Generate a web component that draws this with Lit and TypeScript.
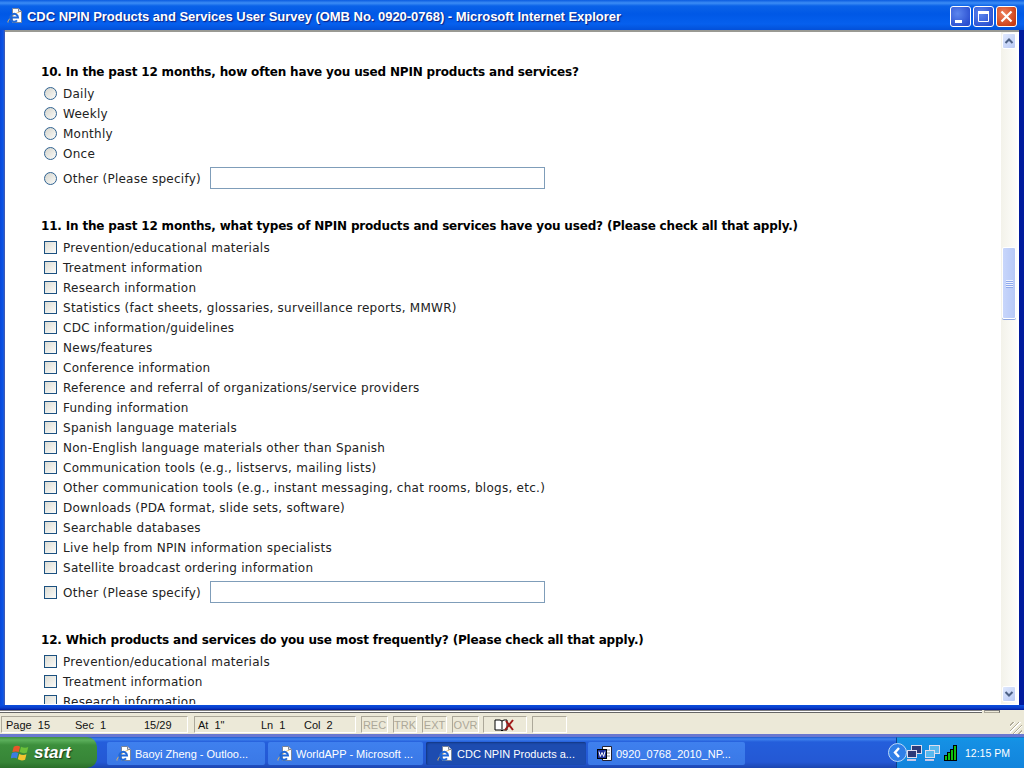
import { LitElement, html, css } from "lit";
import { customElement } from "lit/decorators.js";

const ieIcon = html`<svg width="16" height="16" viewBox="0 0 16 16" class="ico">
  <path d="M5.500 0.500h6l3 3v11h-9z" fill="#fff" stroke="#7a8498" stroke-width="1"/>
  <path d="M11.500 0.500v3h3" fill="#dde" stroke="#7a8498" stroke-width="1"/>
  <path d="M1 14.500c-1-2 6-9 11.500-10.500" fill="none" stroke="#e8b860" stroke-width="1"/>
  <path d="M3.600 9.500h7.400a3.900 3.900 0 1 0-1 2.900" fill="none" stroke="#1f68d8" stroke-width="2"/>
</svg>`;

const wordIcon = html`<svg width="16" height="16" viewBox="0 0 16 16" class="ico">
  <path d="M5.500 0.500h9v14h-9z" fill="#fff" stroke="#223" stroke-width="1"/>
  <path d="M10 4h3M10 7h3M10 10h3" stroke="#889" stroke-width="1"/>
  <rect x="0.500" y="3.500" width="9" height="9" fill="#1c2f9c" stroke="#000" stroke-width="1"/>
  <path d="M2 5.500l1.300 5 1.700-4 1.700 4 1.300-5" fill="none" stroke="#fff" stroke-width="1"/>
</svg>`;

const Q10 = ["Daily", "Weekly", "Monthly", "Once"];
const Q11 = [
  "Prevention/educational materials",
  "Treatment information",
  "Research information",
  "Statistics (fact sheets, glossaries, surveillance reports, MMWR)",
  "CDC information/guidelines",
  "News/features",
  "Conference information",
  "Reference and referral of organizations/service providers",
  "Funding information",
  "Spanish language materials",
  "Non-English language materials other than Spanish",
  "Communication tools (e.g., listservs, mailing lists)",
  "Other communication tools (e.g., instant messaging, chat rooms, blogs, etc.)",
  "Downloads (PDA format, slide sets, software)",
  "Searchable databases",
  "Live help from NPIN information specialists",
  "Satellite broadcast ordering information",
];
const Q12 = ["Prevention/educational materials", "Treatment information", "Research information"];

@customElement("app-root")
export class AppRoot extends LitElement {
  static styles = css`
    :host { display: block; width: 1024px; height: 768px; overflow: hidden; font-family: "DejaVu Sans", Verdana, sans-serif; }
    .screen { width: 1024px; height: 768px; display: flex; flex-direction: column; overflow: hidden; background: #ece9d8; }
    .title { height: 30px; flex: none; display: flex; align-items: center; padding: 2px 7px 0 7px; box-sizing: border-box;
      background: linear-gradient(#0a5be0 0, #3c8df5 3px, #0a62e8 6px, #0058e6 14px, #0660ee 24px, #0350d8 30px); color: #fff; gap: 4px; }
    .title-text { font: bold 13px "Liberation Sans", Arial, sans-serif; letter-spacing: -0.03px; text-shadow: 1px 1px 1px #0f1f80; flex: 1; white-space: nowrap; }
    .ico { flex: none; display: block; }
    .winbtns { display: flex; gap: 2px; }
    .wb { width: 21px; height: 21px; border: 1px solid #fff; border-radius: 3px; box-sizing: border-box;
      background: radial-gradient(circle at 35% 35%, #5c86ee, #2a4fd0 80%); }
    .wb.close { background: radial-gradient(circle at 35% 35%, #f0805c, #c83c14 80%); }
    .wb svg { display: block; width: 19px; height: 19px; }
    .mid { height: 675px; flex: none; display: flex; background: linear-gradient(90deg, #0a55e8, #0a3cc8 60%, #001a9c); box-sizing: border-box; }
    .frame-l { width: 5px; flex: none; background: linear-gradient(90deg, #0a47d8, #0a55e8 60%, #4a5aa8); }
    .frame-r { width: 5px; flex: none; }
    .win { flex: 1; display: flex; border-top: 2px solid #9a9a94; border-bottom: 1px solid #fff; background: #fff; min-width: 0; padding-right: 2px; }
    .page { flex: 1; overflow: hidden; padding: 30px 0 0 36px; box-sizing: border-box; background: #fff; color: #222;
      font: 12px/20px "DejaVu Sans", Verdana, sans-serif; letter-spacing: 0.26px; }
    .q { font-size: 12px; font-weight: bold; color: #000; height: 20px; white-space: nowrap; letter-spacing: -0.17px; }
    .q.next { margin-top: 26px; }
    .list { margin: 2px 0 0 3px; }
    .row { height: 20px; display: flex; align-items: center; gap: 6px; white-space: nowrap; }
    .row.other { height: 22px; margin-top: 4px; }
    .row.other .lbl { margin-right: 3px; }
    .radio { width: 13px; height: 13px; flex: none; margin-top: -2px; border-radius: 50%; border: 1px solid #2f6291; box-sizing: border-box; background: linear-gradient(135deg, #d4d4cc, #fbfbf8); }
    .check { width: 13px; height: 13px; flex: none; margin-top: -2px; border: 1px solid #1c5180; box-sizing: border-box; background: linear-gradient(135deg, #dcdcd4, #fbfbf8); }
    .field { width: 335px; height: 22px; flex: none; margin-top: -2px; box-sizing: border-box; border: 1px solid #7f9db9; background: #fff; }
    .sb { width: 16px; flex: none; background: linear-gradient(90deg, #f3f2ea, #fdfdfa); display: flex; flex-direction: column; justify-content: space-between; position: relative; padding-bottom: 2px; box-sizing: border-box; }
    .sb-btn { width: 14px; height: 16px; margin: 1px 0 0 1px; border: 1px solid #fff; border-radius: 2px; box-sizing: border-box; background: linear-gradient(135deg, #dfe8fd, #b8c9f5); }
    .sb-btn svg { display: block; width: 12px; height: 14px; }
    .thumb { position: absolute; left: 1px; top: 215px; width: 14px; height: 72px; box-sizing: border-box; border: 1px solid #fff; border-radius: 2px; background: linear-gradient(90deg, #c8d6fb, #b7c9f7); box-shadow: 0 1px 0 #8ea6e0; display: flex; flex-direction: column; justify-content: center; align-items: center; gap: 1px; }
    .thumb i { display: block; width: 7px; height: 1px; background: #eef2fe; box-shadow: 0 1px 0 #8fa9ec; }
    .blue { height: 5px; flex: none; background: linear-gradient(#0a4fe0, #0a3cc8 60%, #001a9c); }
    .ruler { height: 5px; flex: none; display: flex; gap: 2px; box-sizing: border-box; padding-right: 24px; }
    .ruler-line { flex: 1; border-top: 1px solid #808080; border-bottom: 1px solid #666; height: 3px; background: #fff; box-sizing: border-box; }
    .ruler-box { width: 16px; border: 1px solid #aca899; border-top-color: #808080; border-right-color: #666; height: 3px; box-sizing: border-box; }
    .status { height: 19px; flex: none; display: flex; align-items: flex-start; padding: 1px 0 0 1px; box-sizing: border-box; gap: 5px; font: 11px "Liberation Sans", Arial, sans-serif; color: #111; background: #ece9d8; position: relative; }
    .cell { height: 17px; flex: none; display: flex; align-items: center; box-sizing: border-box; border: 1px solid #aca899; border-right-color: #fff; border-bottom-color: #fff; white-space: nowrap; }
    .cell span { display: block; }
    .c1 { width: 187px; padding-left: 4px; margin-right: 1px; }
    .c2 { width: 162px; padding-left: 3px; }
    .mini { color: #aca899; justify-content: center; font-size: 11px; }
    .grip { position: absolute; right: 2px; bottom: 0; width: 12px; height: 12px; background: repeating-linear-gradient(135deg, transparent 0 2px, #b0ab98 2px 3px, #fff 3px 4px); }
    .bluebar { height: 3px; flex: none; background: #6a78d0; }
    .task { height: 31px; flex: none; display: flex; align-items: center; box-sizing: border-box; background: linear-gradient(#1f5bd0 0, #3f83ee 2px, #245edb 5px, #2458d4 25px, #1b45b0 31px); position: relative; }
    .start { width: 97px; height: 31px; flex: none; box-sizing: border-box; padding-left: 11px; display: flex; align-items: center; gap: 3px; border-radius: 0 10px 10px 0; background: linear-gradient(#3f8f3f 0, #5cb05c 3px, #3c8f3c 8px, #378537 25px, #2a6f2a 31px); font: italic bold 17px "Liberation Sans", sans-serif; color: #fff; text-shadow: 1px 1px 1px #1a3f1a; }
    .tasks { display: flex; gap: 3px; padding: 2px 0 0 10px; flex: 1; }
    .tb { height: 23px; box-sizing: border-box; padding-left: 9px; display: flex; align-items: center; gap: 3px; border-radius: 2px; flex: none; background: linear-gradient(#3f80ee, #3a78e6); color: #fff; font: 11px "Liberation Sans", sans-serif; white-space: nowrap; }
    .tb.act { background: #1d4cb0; box-shadow: inset 1px 1px 2px #123580; margin-right: -1px; padding-left: 11px; gap: 4px; }
    .tray { position: absolute; right: 0; top: 0; width: 128px; height: 31px; box-sizing: border-box; display: flex; align-items: center; gap: 2px; padding-left: 9px; background: linear-gradient(#0e9ae8, #1590e4 10%, #1284dc); border-left: 1px solid #0e3f8f; border-top: 1px solid #1a78c8; color: #fff; font: 10.5px "Liberation Sans", sans-serif; }
    .chev { position: absolute; left: -9px; top: 5px; width: 19px; height: 19px; }
    .clock { margin-left: 5px; white-space: nowrap; }
  `;

  private chk(label: string) {
    return html`<div class="row"><span class="check"></span><span>${label}</span></div>`;
  }
  private rad(label: string) {
    return html`<div class="row"><span class="radio"></span><span>${label}</span></div>`;
  }

  render() {
    const net = (c: string) => html`<svg width="16" height="16" viewBox="0 0 16 16" class="ico">
      <rect x="5.500" y="0.500" width="10" height="8" fill=${c} stroke="#dde" stroke-width="1"/>
      <rect x="1.500" y="5.500" width="9" height="7" fill=${c} stroke="#dde" stroke-width="1"/>
      <path d="M1 14h9v2H1z" fill="#c8c8e8"/>
    </svg>`;
    return html`<div class="screen">
      <div class="title">
        ${ieIcon}
        <div class="title-text">CDC NPIN Products and Services User Survey (OMB No. 0920-0768) - Microsoft Internet Explorer</div>
        <div class="winbtns">
          <div class="wb"><svg viewBox="0 0 19 19"><rect x="4" y="13" width="7" height="3" fill="#fff"/></svg></div>
          <div class="wb"><svg viewBox="0 0 19 19"><path d="M4.500 4.500h10v10h-10z" fill="none" stroke="#fff" stroke-width="1"/><rect x="4" y="4" width="11" height="3" fill="#fff"/></svg></div>
          <div class="wb close"><svg viewBox="0 0 19 19"><path d="M4.500 4.500l10 10M14.500 4.500l-10 10" stroke="#fff" stroke-width="2.200"/></svg></div>
        </div>
      </div>
      <div class="mid">
        <div class="frame-l"></div>
        <div class="win">
          <div class="page">
            <div class="q">10. In the past 12 months, how often have you used NPIN products and services?</div>
            <div class="list">
              ${Q10.map((l) => this.rad(l))}
              <div class="row other"><span class="radio"></span><span class="lbl">Other (Please specify)</span><span class="field"></span></div>
            </div>
            <div class="q next">11. In the past 12 months, what types of NPIN products and services have you used? (Please check all that apply.)</div>
            <div class="list">
              ${Q11.map((l) => this.chk(l))}
              <div class="row other"><span class="check"></span><span class="lbl">Other (Please specify)</span><span class="field"></span></div>
            </div>
            <div class="q next">12. Which products and services do you use most frequently? (Please check all that apply.)</div>
            <div class="list">${Q12.map((l) => this.chk(l))}</div>
          </div>
          <div class="sb">
            <div class="sb-btn"><svg viewBox="0 0 12 14"><path d="M2.500 9L6 5.500 9.500 9" fill="none" stroke="#4d6185" stroke-width="2"/></svg></div>
            <div class="thumb"><i></i><i></i><i></i><i></i></div>
            <div class="sb-btn"><svg viewBox="0 0 12 14"><path d="M2.500 5L6 8.500 9.500 5" fill="none" stroke="#4d6185" stroke-width="2"/></svg></div>
          </div>
        </div>
        <div class="frame-r"></div>
      </div>
      <div class="blue"></div>
      <div class="ruler"><div class="ruler-line"></div><div class="ruler-box"></div></div>
      <div class="status">
        <div class="cell c1">
          <span style="width:69px">Page&nbsp; 15</span><span style="width:69px">Sec&nbsp; 1</span><span>15/29</span>
        </div>
        <div class="cell c2">
          <span style="width:63px">At&nbsp; 1"</span><span style="width:43px">Ln&nbsp; 1</span><span>Col&nbsp; 2</span>
        </div>
        <div class="cell mini" style="width:27px">REC</div>
        <div class="cell mini" style="width:24px">TRK</div>
        <div class="cell mini" style="width:25px">EXT</div>
        <div class="cell mini" style="width:27px;margin-right:-1px">OVR</div>
        <div class="cell" style="width:44px;justify-content:center">
          <svg width="22" height="14" viewBox="0 0 22 14"><path d="M1 2h5l2 1 2-1h3v10H9l-1 1-1-1H1z" fill="#fff" stroke="#000"/><path d="M8 3v9" stroke="#000"/><path d="M11 12L19 2M12 3l7 9" stroke="#a01818" stroke-width="2"/></svg>
        </div>
        <div class="cell" style="width:35px"></div>
        <div class="grip"></div>
      </div>
      <div class="bluebar"></div>
      <div class="task">
        <div class="start">
          <svg width="20" height="20" viewBox="0 0 22 20" class="ico">
            <path d="M3 3q4-2 7 0l-1.500 6q-3-1.500-7 0z" fill="#e8562a"/>
            <path d="M11 3q4 2 8 .5l-1.500 6q-4 1.500-8-.5z" fill="#6cc03a"/>
            <path d="M1 10q4-1.500 7 0l-1.500 6q-3-1.500-7 0z" fill="#3c7ce0"/>
            <path d="M9 11q4 2 8 .5l-1.500 6q-4 1.500-8-.5z" fill="#f4c430"/>
          </svg>
          <span>start</span>
        </div>
        <div class="tasks">
          <div class="tb" style="width:158px">${ieIcon}<span>Baoyi Zheng - Outloo...</span></div>
          <div class="tb" style="width:155px">${ieIcon}<span>WorldAPP - Microsoft ...</span></div>
          <div class="tb act" style="width:160px">${ieIcon}<span>CDC NPIN Products a...</span></div>
          <div class="tb" style="width:157px">${wordIcon}<span>0920_0768_2010_NP...</span></div>
        </div>
        <div class="tray">
          <svg class="chev" viewBox="0 0 19 19"><circle cx="9.500" cy="9.500" r="9" fill="#2f7fe8" stroke="#bcd8f8"/><path d="M11 5l-4 4.500 4 4.500" fill="none" stroke="#fff" stroke-width="2.400"/></svg>
          ${net("#2c3a78")}
          ${net("#58b8ee")}
          <svg width="14" height="16" viewBox="0 0 14 16" class="ico" style="margin-left:2px">
            <rect x="0.500" y="10.500" width="3" height="5" fill="#10c010" stroke="#000"/>
            <rect x="3.500" y="7.500" width="3" height="8" fill="#10c010" stroke="#000"/>
            <rect x="6.500" y="4.500" width="3" height="11" fill="#10c010" stroke="#000"/>
            <rect x="9.500" y="0.500" width="3" height="15" fill="#10c010" stroke="#000"/>
          </svg>
          <span class="clock">12:15 PM</span>
        </div>
      </div>
    </div>`;
  }
}
